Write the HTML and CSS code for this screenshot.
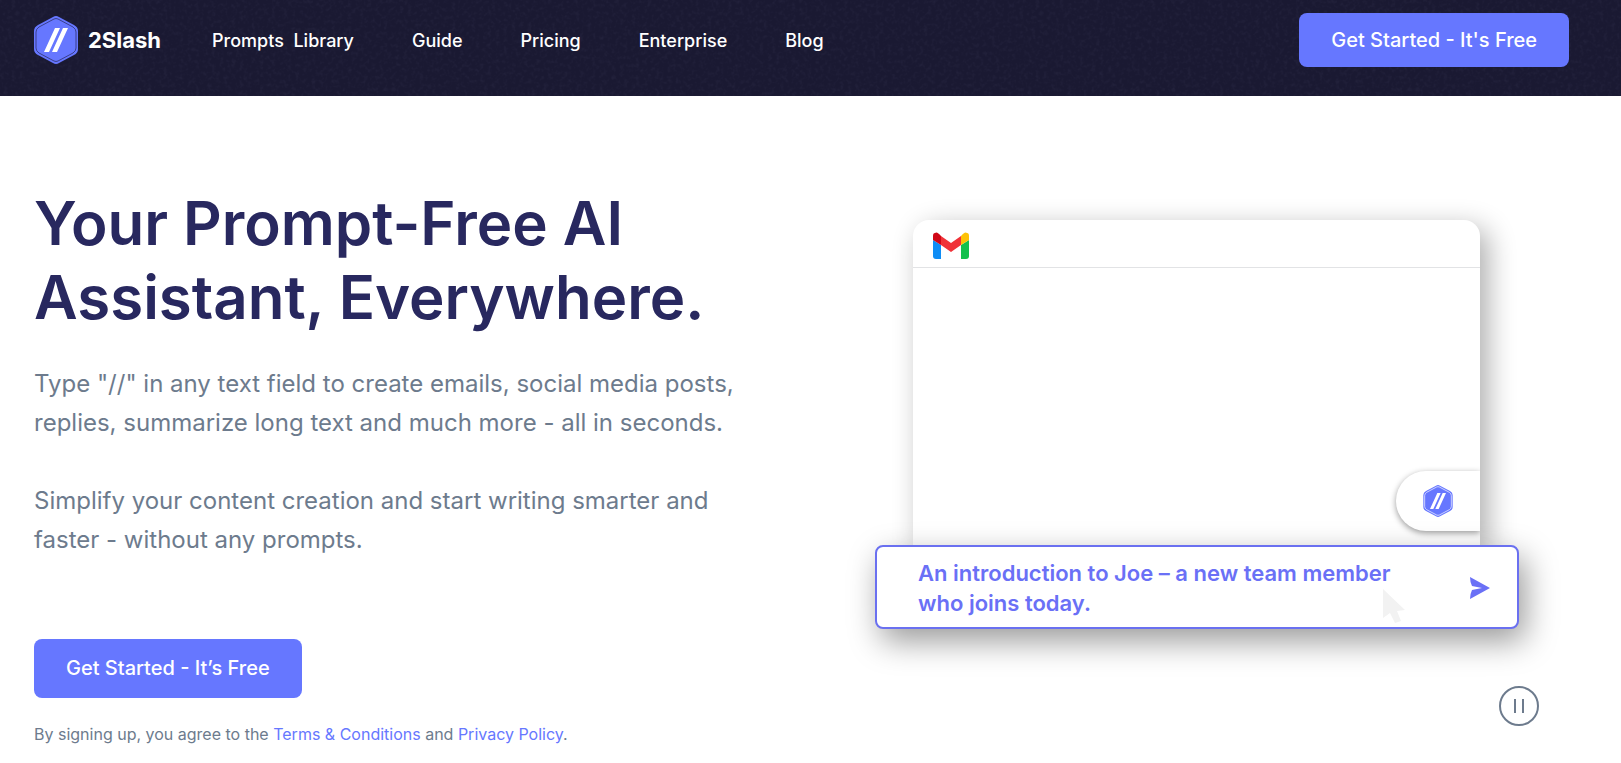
FILE: index.html
```html
<!DOCTYPE html>
<html lang="en">
<head>
    <meta charset="UTF-8">
    <meta name="viewport" content="width=device-width, initial-scale=1.0">
    <title>2Slash</title>
    <link rel="stylesheet" href="styles.css">
</head>
<body>
    <header class="header">
        <svg class="header-grain" aria-hidden="true">
            <filter id="grain">
                <feTurbulence type="fractalNoise" baseFrequency="0.25" numOctaves="2" seed="4"/>
                <feColorMatrix values="0 0 0 0 0.5  0 0 0 0 0.5  0 0 0 0 0.8  0.9 0 0 0 -0.4"/>
            </filter>
            <rect width="100%" height="100%" filter="url(#grain)"/>
        </svg>
        <a class="brand" href="#">
            <svg class="brand-logo" viewBox="0 0 44 48" aria-hidden="true">
                <path class="hex" d="M19 1Q22 -1 25 1L40 9Q44 11 44 15V33Q44 37 40 39L25 47Q22 49 19 47L4 39Q0 37 0 33V15Q0 11 4 9Z"/>
                <path class="hex-line" d="M20 3Q22 2 24 3L39 11Q42 13 42 16V32Q42 35 39 37L24 45Q22 46 20 45L5 37Q2 35 2 32V16Q2 13 5 11Z"/>
                <path class="slash" d="M21 12H26L15 36H10ZM29 12H34L23 36H18Z"/>
            </svg>
            <span>2Slash</span>
        </a>
        <nav class="nav">
            <a href="#">Prompts&nbsp; Library</a>
            <a href="#">Guide</a>
            <a href="#">Pricing</a>
            <a href="#">Enterprise</a>
            <a href="#">Blog</a>
        </nav>
        <a class="cta cta-header" href="#">Get Started - It's Free</a>
    </header>

    <main class="hero">
        <section class="intro">
            <h1>Your Prompt-Free AI<br>Assistant, Everywhere.</h1>
            <p class="lead">Type "//" in any text field to create emails, social media posts,<br>replies, summarize long text and much more - all in seconds.</p>
            <p class="lead">Simplify your content creation and start writing smarter and<br>faster - without any prompts.</p>
            <a class="cta cta-hero" href="#">Get Started - It’s Free</a>
            <p class="terms">By signing up, you agree to the <a href="#">Terms &amp; Conditions</a> and <a href="#">Privacy Policy</a>.</p>
        </section>

        <section class="demo">
            <div class="mail">
                <div class="mail-bar">
                    <svg class="gmail" viewBox="0 0 36 27" aria-hidden="true">
                        <path fill="#0f8df5" d="M0 8L8 13V27H3Q0 27 0 24Z"/>
                        <path fill="#14c04d" d="M28 13L36 8V24Q36 27 33 27H28Z"/>
                        <path fill="#f03238" d="M8 4L18 11L28 4V13L18 20L8 13Z"/>
                        <path fill="#d00716" d="M0 8V4Q0 1 2 1Q4 -1 8 4V13Z"/>
                        <path fill="#fdc107" d="M36 8V4Q36 1 34 1Q32 -1 28 4V13Z"/>
                    </svg>
                </div>
                <div class="mail-tab">
                    <svg class="tab-logo" viewBox="0 0 44 48" aria-hidden="true">
                        <path class="hex" d="M19 1Q22 -1 25 1L40 9Q44 11 44 15V33Q44 37 40 39L25 47Q22 49 19 47L4 39Q0 37 0 33V15Q0 11 4 9Z"/>
                        <path class="hex-line" d="M20 3Q22 2 24 3L39 11Q42 13 42 16V32Q42 35 39 37L24 45Q22 46 20 45L5 37Q2 35 2 32V16Q2 13 5 11Z"/>
                        <path class="slash" d="M21 12H26L15 36H10ZM29 12H34L23 36H18Z"/>
                    </svg>
                </div>
            </div>
            <form class="prompt">
                <textarea class="prompt-text" rows="2" aria-label="Prompt">An introduction to Joe – a new team member
who joins today.</textarea>
                <button class="send" type="button" aria-label="Send">
                    <svg viewBox="0 0 20 22" aria-hidden="true">
                        <path d="M0 0L20 11L0 22Q0 17 2 13L12 11L2 9Q0 5 0 0Z"/>
                    </svg>
                </button>
                <svg class="cursor" viewBox="0 0 22 34" aria-hidden="true">
                    <path d="M0 0L22 21L14 22L18 32L12 34L7 24L0 29Z"/>
                </svg>
            </form>
            <button class="pause" type="button" aria-label="Pause">
                <svg viewBox="0 0 40 40" aria-hidden="true">
                    <circle cx="20" cy="20" r="19"/>
                    <path d="M16 13V27M24 13V27"/>
                </svg>
            </button>
        </section>
    </main>
</body>
</html>
```

FILE: styles.css
```css
* {
    box-sizing: border-box;
}
body {
    margin: 0;
    background-color: white;
    font-family: Inter, "Open Sans", sans-serif;
    color: #6d7b8d;
}
a {
    text-decoration: none;
}
.header {
    position: relative;
    display: flex;
    align-items: center;
    height: 96px;
    padding: 0 52px 16px 34px;
    background-color: #1a1932;
    isolation: isolate;
}
.header-grain {
    position: absolute;
    inset: 0;
    z-index: -1;
    width: 100%;
    height: 100%;
    opacity: 0.12;
}
.brand {
    display: flex;
    align-items: center;
    gap: 10px;
    color: white;
    font-size: 22px;
    font-weight: 700;
}
.brand-logo {
    width: 44px;
    height: 48px;
}
.hex {
    fill: #6677ff;
}
.hex-line {
    fill: none;
    stroke: #3a3f8c;
    stroke-width: 1;
}
.slash {
    fill: white;
}
.nav {
    display: flex;
    flex: 1;
    gap: 58px;
    margin-left: 51px;
}
.nav a {
    color: white;
    font-size: 18px;
    font-weight: 500;
}
.cta {
    display: inline-block;
    padding: 0 32px;
    border-radius: 8px;
    background-color: #6677ff;
    color: white;
    font-size: 20px;
    font-weight: 500;
}
.cta-header {
    line-height: 54px;
}
.cta-hero {
    margin-top: 41px;
    line-height: 59px;
}
.hero {
    display: grid;
    grid-template-columns: 19fr 15fr;
    padding: 90px 82px 0 34px;
}
h1 {
    margin: 0 0 30px;
    color: #28285f;
    font-size: 60px;
    font-weight: 600;
    line-height: 74px;
}
.lead {
    margin: 0 0 39px;
    font-size: 24px;
    line-height: 39px;
}
.terms {
    margin: 24px 0 0;
    font-size: 16px;
    line-height: 24px;
}
.terms a {
    color: #6677ff;
}
.demo {
    display: flex;
    flex-direction: column;
    padding-top: 34px;
}
.mail {
    display: flex;
    flex-direction: column;
    justify-content: space-between;
    height: 325px;
    margin: 0 59px 0 38px;
    padding-bottom: 14px;
    border-radius: 16px 16px 0 0;
    box-shadow: 8px 8px 28px rgba(0, 0, 0, 0.32);
}
.mail-bar {
    display: flex;
    align-items: center;
    height: 48px;
    padding: 4px 20px 0;
    border-bottom: 1px solid #e2e3e5;
}
.gmail {
    width: 36px;
    height: 27px;
}
.mail-tab {
    display: flex;
    align-items: center;
    align-self: flex-end;
    width: 84px;
    height: 60px;
    padding-left: 26px;
    border-radius: 30px 0 0 30px;
    background-color: white;
    box-shadow: 0 2px 6px rgba(0, 0, 0, 0.4);
    clip-path: inset(-12px 0 -12px -12px);
}
.tab-logo {
    width: 32px;
    height: 32px;
}
.tab-logo .hex-line {
    stroke: white;
}
.prompt {
    position: relative;
    display: flex;
    align-items: center;
    height: 84px;
    margin-right: 20px;
    padding: 2px 24px 0 41px;
    border: 2px solid #6a70f0;
    border-radius: 8px;
    background-color: white;
    box-shadow: 6px 12px 32px rgba(0, 0, 0, 0.4);
}
.prompt-text {
    flex: 1;
    height: 60px;
    padding: 0;
    border: 0;
    outline: 0;
    overflow: hidden;
    resize: none;
    background-color: transparent;
    color: #6a70f6;
    font-family: inherit;
    font-size: 22px;
    font-weight: 600;
    line-height: 30px;
}
.send {
    width: 24px;
    height: 22px;
    padding: 0;
    border: 0;
    background: none;
    cursor: pointer;
}
.send svg {
    display: block;
    width: 22px;
    height: 22px;
    fill: #6a70f6;
}
.cursor {
    position: absolute;
    right: 112px;
    bottom: 4px;
    width: 22px;
    height: 34px;
    fill: #f2f2f2;
}
.pause {
    align-self: flex-end;
    width: 40px;
    height: 40px;
    margin-top: 57px;
    padding: 0;
    border: 0;
    background: none;
    cursor: pointer;
}
.pause svg {
    display: block;
    fill: none;
    stroke: #6d7b8d;
    stroke-width: 2;
}
```
